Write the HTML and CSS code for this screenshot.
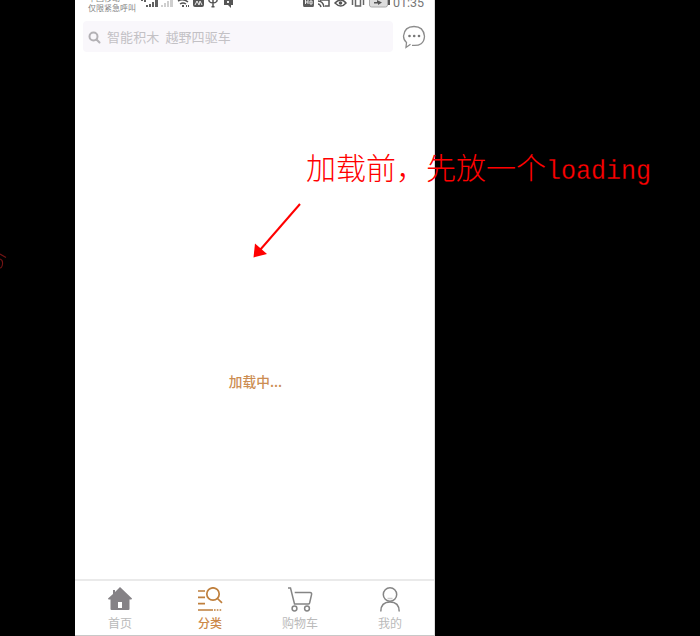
FILE: index.html
```
<!DOCTYPE html>
<html lang="zh-CN">
<head>
<meta charset="utf-8">
<title>加载中</title>
<link rel="stylesheet" href="styles.css">
</head>
<body>
<div class="stage">
  <main class="phone">
    <header class="status">
      <div class="carrier"><span>中国移动</span><span>仅限紧急呼叫</span></div>
      <svg class="status-left" width="96" height="10" viewBox="0 0 96 10">
        <g fill="#606060"><path d="M0 0h2v1H0zM3 0h2v2H3zM5 5h2v2H5zM8 4h2v3H8zM11 2h2v5h-2zM14 0h3v7h-3z"/></g>
        <g fill="#cfcfcf"><path d="M20 5h2v2h-2zM23 3h2v4h-2zM26 1h2v6h-2zM29 0h3v7h-3z"/></g>
        <g fill="none" stroke="#555" stroke-width="1.5"><path d="M37 1q5-3 10 1M39 4q3-2 6 0M68 0v1q1 2 4 2 3 0 4-2V0M72 0v7"/></g>
        <path fill="#555" d="M41 5h2v2h-2zM45 5h1v2h-1zM47 5h1v2h-1zM52 0h11v5q0 2-2 2h-7q-2 0-2-2zM70.500 6h3v1.500h-3zM83 0h9v5h-2v3l-3-3h-4z"/>
        <path fill="none" stroke="#eee" d="M54 5l2-4 2 4 1-4 2 4"/>
        <path fill="#eee" d="M86 1h2v2h-2z"/>
      </svg>
      <svg class="status-right" width="89" height="10" viewBox="0 0 89 10">
        <path fill="#5c5c5c" d="M0 0h11v5q0 2-1 2H1Q0 7 0 5z"/>
        <path d="M2.500 0v4M5 0v4M2.500 2H5M7 1h2v3H7z" fill="none" stroke="#eee"/>
        <path d="M17 0h9v6h-4M15 1q5 0 6 6M15 4q2 0 3 3" fill="none" stroke="#555" stroke-width="1.500"/>
        <path d="M32 3q6-6 11 0-5 6-11 0z" fill="none" stroke="#555" stroke-width="1.500"/><circle cx="37.500" cy="3" r="1.800" fill="#555"/>
        <path d="M52.500 0v6h5V0M49.500 0v5M60.500 0v5" fill="none" stroke="#666" stroke-width="1.500"/>
        <path d="M66.500 0v5q0 2 2 2h14q2 0 2-2V0" fill="#ddd" stroke="#aaa"/><path fill="#555" d="M71 2h3V0l5 2.500L75 5V3.500h-4zM85 0h2v5h-2z"/>
      </svg>
      <span class="time">01:35</span>
    </header>
    <div class="search-row">
      <div class="search">
        <svg width="14" height="14" viewBox="0 0 14 14" fill="none" stroke="#b3b1b5" stroke-width="2" stroke-linecap="round"><circle cx="5.500" cy="5.500" r="4"/><path d="M8.500 8.500l3 3"/></svg>
        <span>智能积木&nbsp; 越野四驱车</span>
      </div>
      <svg class="chat" width="24" height="24" viewBox="0 0 24 24" fill="none" stroke="#8c8c8c" stroke-width="1.300"><path d="M10 20.300q12 1.300 12.500-9Q21.500 1.500 12 1.500T1.500 11q0 4 3 6.500l-.5 5 4.500-3.200"/><g fill="#777" stroke="none"><circle cx="7.500" cy="11" r="1.300"/><circle cx="12.200" cy="11" r="1.300"/><circle cx="17" cy="11" r="1.300"/></g></svg>
    </div>
    <section class="content"><p>加载中...</p></section>
    <nav class="tabs">
      <div class="tab">
        <svg width="26" height="26" viewBox="0 0 26 26"><path fill="#858286" d="M13 0l12 11.500q0 1-1 1h-1.500V22q0 1-1 1h-17q-1 0-1-1v-9.500H2q-1 0-1-1L6 7V3h2v2z"/><path fill="#fff" d="M11 15h4v6h-4z"/></svg>
        <span>首页</span>
      </div>
      <div class="tab active">
        <svg width="26" height="26" viewBox="0 0 26 26" fill="none" stroke="#bf7f3c" stroke-width="1.700"><circle cx="16" cy="7" r="6.200"/><path d="M20.500 11.500l4.500 4.300M1 4h7M1 10.300h7M1 16.700h7M1 23h15"/><path d="M17 23h8" stroke-dasharray="1.600 1.200"/></svg>
        <span>分类</span>
      </div>
      <div class="tab">
        <svg width="26" height="26" viewBox="0 0 26 26" fill="none" stroke="#858585" stroke-width="1.500"><path d="M1 1h2.500L7.500 17h13.800q1 0 1.300-1l2-8.500q.2-2-1.500-2H7.700"/><circle cx="7.500" cy="21.500" r="2.400"/><circle cx="20" cy="21.500" r="2.400"/></svg>
        <span>购物车</span>
      </div>
      <div class="tab">
        <svg width="26" height="26" viewBox="0 0 26 26" fill="none" stroke="#858585" stroke-width="1.500"><circle cx="13" cy="7.500" r="6.700"/><path d="M3.800 24.500q0-9.500 9.200-9.500t9.200 9.500"/><path d="M10.500 11.500h5" stroke="#ccc"/></svg>
        <span>我的</span>
      </div>
    </nav>
  </main>
  <div class="note"><span>加载前，先放一个</span><span class="latin">loading</span></div>
  <svg class="arrow" width="52" height="60" viewBox="0 0 52 60"><path d="M50 4L10 50" stroke="#f00" stroke-width="2"/><path d="M3.500 57.500L5 43.500l12 10.500z" fill="#f00"/></svg>
  <svg class="fragment" width="8" height="18" viewBox="0 0 8 18" fill="none" stroke="#741414" stroke-width="1.100"><path d="M0 2l6 3.500M0 7q3 1 2.500 5T0 16"/></svg>
</div>
</body>
</html>
```
FILE: styles.css
```
* { box-sizing: border-box; }
body { margin: 0; background: #000; font-family: "Noto Sans CJK SC", sans-serif; }
.stage { position: relative; width: 700px; height: 636px; overflow: hidden; padding-left: 75px; }
.phone { width: 360px; height: 636px; background: #fff; display: flex; flex-direction: column; border-bottom: 1px solid #c8c8c8; border-right: 1px solid #ddd; }
.status { height: 21px; display: flex; align-items: flex-start; overflow: hidden; padding-left: 13px; color: #777; flex: none; }
.carrier { display: flex; flex-direction: column; width: 51px; margin-top: -7px; font-size: 8px; line-height: 10px; white-space: nowrap; color: #858585; }
.status-left { flex: none; margin-left: 2px; }
.status-right { flex: none; margin-left: 66px; }
.time { font: 12.5px/14px Roboto, sans-serif; margin-top: -4px; margin-left: 1px; color: #777; }
.search-row { display: flex; align-items: center; height: 31px; padding-left: 8px; flex: none; }
.search { width: 310px; height: 31px; border-radius: 4px; background: #f9f7fb; display: flex; align-items: center; gap: 5px; padding-left: 5px; color: #c3c1c5; font-size: 13px; line-height: 20px; letter-spacing: .1px; }
.search svg { margin-top: 2px; }
.search span { white-space: pre; }
.chat { margin-left: 9px; }
.content { flex: 1; display: flex; justify-content: center; padding-top: 319px; }
.content p { margin: 0; font-size: 13.7px; line-height: 20px; font-weight: 500; color: #cc8d52; padding-left: 2px; }
.tabs { height: 56px; flex: none; border-top: 2px solid #eaeaea; display: grid; grid-template-columns: repeat(4, 90px); }
.tab { display: flex; flex-direction: column; align-items: center; padding-top: 6px; color: #bababa; font-size: 12px; line-height: 18px; }
.tab svg { margin-bottom: 1px; flex: none; }
.active { color: #cc8848; font-weight: 500; }
.note { position: absolute; left: 306px; top: 146px; height: 40px; display: flex; align-items: baseline; color: #f00; font-size: 30px; line-height: 40px; font-weight: 300; white-space: nowrap; }
.latin { font-family: "Liberation Mono", monospace; font-size: 25px; font-weight: 400; transform: scaleY(1.14); transform-origin: 50% 70%; -webkit-text-stroke: .25px #000; }
.arrow { position: absolute; left: 250px; top: 200px; }
.fragment { position: absolute; left: 0; top: 252px; }
```
